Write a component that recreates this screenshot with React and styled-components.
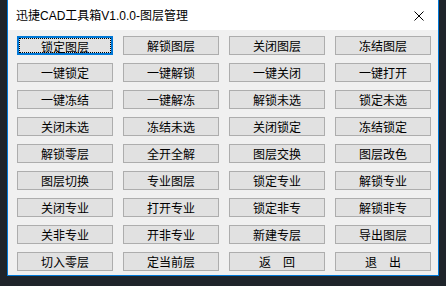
import * as React from 'react'
import styled, { createGlobalStyle } from 'styled-components'

const Global = createGlobalStyle`
  html, body {
    margin: 0;
    padding: 0;
    background: #1f242a;
    width: 446px;
    height: 286px;
    overflow: hidden;
  }
  * { box-sizing: border-box; }
`

const Window = styled.div`
  margin-left: 7px;
  width: 432px;
  height: 276px;
  border: 1px solid #0078d7;
  border-top: none;
  background: #f0f0f0;
  display: flex;
  flex-direction: column;
  font-family: "Noto Sans CJK SC", "Liberation Sans", sans-serif;
`

const TitleBar = styled.div`
  height: 30px;
  background: #ffffff;
  display: flex;
  align-items: center;
  justify-content: space-between;
  padding: 0 9px 0 8px;
  font-family: "Liberation Sans", "Noto Sans CJK SC", sans-serif;
  font-size: 12px;
  color: #000;
`

const Title = styled.span`
  line-height: 14px;
  padding-top: 1px;
`

const Close = styled.span`
  display: flex;
  width: 10px;
  height: 10px;
  margin-right: 5px;
  margin-top: 1px;
`

const Grid = styled.div`
  display: grid;
  grid-template-columns: repeat(4, 96px);
  grid-auto-rows: 19px;
  column-gap: 10px;
  row-gap: 8px;
  padding: 6px 0 0 9px;
`

const Button = styled.button`
  position: relative;
  margin: 0;
  padding: 0;
  background: #e1e1e1;
  border: ${p => (p.$focused ? '2px solid #0078d7' : '1px solid #adadad')};
  font-family: "Noto Sans CJK SC", "Liberation Sans", sans-serif;
  font-size: 12px;
  color: #000;
  line-height: 17px;
  white-space: pre;
  cursor: default;
  outline: ${p => (p.$focused ? '1px dotted #000' : 'none')};
  outline-offset: ${p => (p.$focused ? '-3px' : '0')};
`

const labels = [
  '锁定图层', '解锁图层', '关闭图层', '冻结图层',
  '一键锁定', '一键解锁', '一键关闭', '一键打开',
  '一键冻结', '一键解冻', '解锁未选', '锁定未选',
  '关闭未选', '冻结未选', '关闭锁定', '冻结锁定',
  '解锁零层', '全开全解', '图层交换', '图层改色',
  '图层切换', '专业图层', '锁定专业', '解锁专业',
  '关闭专业', '打开专业', '锁定非专', '解锁非专',
  '关非专业', '开非专业', '新建专层', '导出图层',
  '切入零层', '定当前层', '返\u3000回', '退\u3000出',
]

export default function App() {
  return (
    <>
      <Global />
      <Window>
        <TitleBar>
          <Title>迅捷CAD工具箱V1.0.0-图层管理</Title>
          <Close>
            <svg width="10" height="10" viewBox="0 0 10 10">
              <path d="M0.5 0.5 L9.5 9.5 M9.5 0.5 L0.5 9.5" stroke="#000" strokeWidth="1" />
            </svg>
          </Close>
        </TitleBar>
        <Grid>
          {labels.map((l, i) => (
            <Button key={i} $focused={i === 0}>{l}</Button>
          ))}
        </Grid>
      </Window>
    </>
  )
}
